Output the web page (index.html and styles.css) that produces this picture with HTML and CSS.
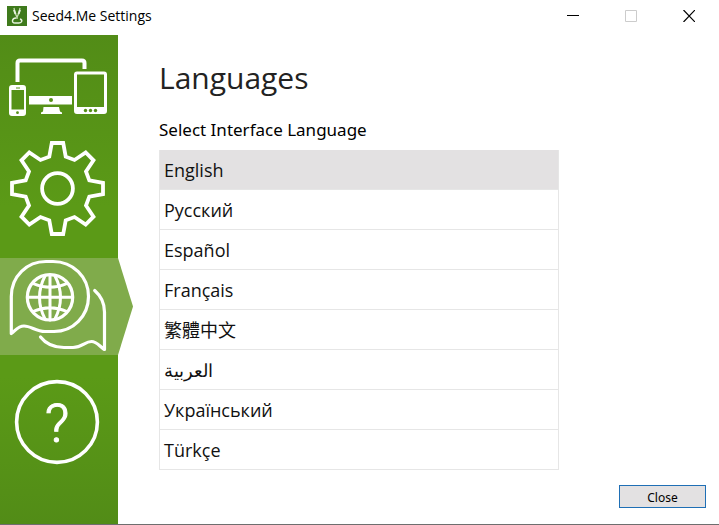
FILE: index.html
```html
<!DOCTYPE html>
<html lang="en">
<head>
    <meta charset="UTF-8">
    <meta name="viewport" content="width=device-width, initial-scale=1.0">
    <title>Seed4.Me Settings</title>
    <link rel="stylesheet" href="styles.css">
</head>
<body>
    <header class="titlebar">
        <svg class="app-icon" viewBox="0 0 20 20" aria-hidden="true">
            <rect width="20" height="20" fill="#3f7a1c"/>
            <path d="M7 2l1 5c1 2 2 3 2 6M13 2l-1 5c-1 2-2 3-2 6" fill="none" stroke="#c5dcb0" stroke-width="1.3"/>
            <path d="M7 4l1.500 4M13 4l-1.500 4" stroke="#e8f2df" stroke-width="2"/>
            <path d="M9 12c-4 0-5 5-1 5h4c3 0 4-3 1-4" fill="none" stroke="#e8f2df" stroke-width="1.4"/>
        </svg>
        <span class="title">Seed4.Me Settings</span>
        <div class="window-buttons">
            <button type="button" class="window-button" aria-label="Minimize">
                <svg viewBox="0 0 12 12"><path d="M0 5.5h12" stroke="#000"/></svg>
            </button>
            <button type="button" class="window-button" aria-label="Maximize" disabled>
                <svg viewBox="0 0 12 12"><path d="M.5 .5h11v11H.5z" stroke="#ccc"/></svg>
            </button>
            <button type="button" class="window-button" aria-label="Close window">
                <svg viewBox="0 0 12 12"><path d="M.5 0l11.500 12M12 0L.5 12" stroke="#000" stroke-width="1.2"/></svg>
            </button>
        </div>
    </header>

    <div class="window">
        <nav class="sidebar">
            <button type="button" class="nav-item" aria-label="Devices">
                <svg width="118" height="61" viewBox="0 0 118 61">
                    <path d="M17.500 24V5q0-2.500 2.500-2.500h62q2.500 0 2.500 2.500v6" fill="none" stroke="#fff" stroke-width="4"/>
                    <path d="M12 27h11q3 0 3 3v25q0 3-3 3H12q-3 0-3-3V30q0-3 3-3zM11.500 32v19.500h12.500V32z" fill="#fff" fill-rule="evenodd"/>
                    <path d="M16 30h4" stroke="#559016"/>
                    <circle cx="17.500" cy="54.700" r="1.400" fill="#559016"/>
                    <path d="M29 38h43v8.500H29zM43.500 49h15.500l1 4.500 2 1V56H41v-1.500l2-1z" fill="#fff"/>
                    <circle cx="51" cy="42" r="2" fill="#559016"/>
                    <path d="M77 13.500h27q3 0 3 3V53q0 3-3 3H77q-3 0-3-3V16.500q0-3 3-3zM77 16.500v32.500h27V16.500z" fill="#fff" fill-rule="evenodd"/>
                    <g fill="#559016">
                        <circle cx="85.500" cy="52.500" r="1.700"/>
                        <circle cx="90.500" cy="52.500" r="1.700"/>
                        <circle cx="95.500" cy="52.500" r="1.700"/>
                    </g>
                </svg>
            </button>
            <button type="button" class="nav-item" aria-label="Settings">
                <svg width="118" height="95" viewBox="0 0 118 95">
                    <g transform="translate(57.500 47.500)" fill="none" stroke="#fff" stroke-width="3.800">
                        <path d="M-5.700-45.500H5.700L8.200-31.800 17-28.500 28.200-36 36-28.200 28.500-17 31.800-8.200 45.500-5.700V5.700L31.800 8.200 28.500 17 36 28.200 28.200 36 17 28.500 8.200 31.800 5.700 45.500H-5.700L-8.200 31.800-17 28.500-28.200 36-36 28.200-28.500 17-31.800 8.200-45.500 5.700V-5.700L-31.800-8.200-28.500-17-36-28.200-28.200-36-17-28.500-8.200-31.800z"/>
                        <circle r="15.400"/>
                    </g>
                </svg>
            </button>
            <button type="button" class="nav-item active" aria-label="Languages" aria-current="page">
                <svg width="118" height="97" viewBox="0 0 118 97">
                    <g fill="none" stroke="#fff" stroke-width="3.200" stroke-linecap="round" stroke-linejoin="round">
                        <path d="M11.300 75.500V38.500C11.300 18 27 3.500 46 3.500H53C73 3.500 88.500 19 88.500 38.500S73 73.500 54 73.500H45C36 73.500 31 68 24 68C18 68 15 73 11.300 75.500z"/>
                        <path d="M94.700 32.500C101 38 104.500 46 104.500 54V91.500C100 89 97 83.500 91.500 83.500C85 83.500 82 89.500 73 89.500H64C54 89.500 46 86 40.500 79"/>
                        <circle cx="50" cy="39.300" r="22.700"/>
                        <path d="M50 17v45M27.500 39.300h45M33 25.500Q50 33 67 25.500M33 53.500Q50 46 67 53.500" stroke-width="3"/>
                        <path d="M45 18Q34 39.300 45 61M55 18Q66 39.300 55 61" stroke-width="3"/>
                    </g>
                </svg>
            </button>
            <button type="button" class="nav-item" aria-label="Help">
                <svg width="118" height="90" viewBox="0 0 118 90">
                    <circle cx="57" cy="45" r="40.400" fill="none" stroke="#fff" stroke-width="3.600"/>
                    <text class="help-mark" x="57" y="65" text-anchor="middle">?</text>
                </svg>
            </button>
        </nav>

        <main class="content">
            <h1>Languages</h1>
            <h2 id="language-label">Select Interface Language</h2>
            <ul class="language-list" role="listbox" aria-labelledby="language-label">
                <li role="option" class="selected" aria-selected="true">English</li>
                <li role="option">Русский</li>
                <li role="option">Español</li>
                <li role="option">Français</li>
                <li role="option" lang="zh-Hant">繁體中文</li>
                <li role="option" lang="ar">العربية</li>
                <li role="option">Український</li>
                <li role="option">Türkçe</li>
            </ul>
            <button type="button" class="close-button">Close</button>
        </main>
    </div>
</body>
</html>
```
FILE: styles.css
```css
* {
    box-sizing: border-box;
}
body {
    display: flex;
    flex-direction: column;
    min-height: 100vh;
    margin: 0;
    background: #fff;
    border-bottom: 1px solid #6e6e6e;
    color: #111;
    font-family: "Open Sans", "Noto Sans", "Noto Sans CJK TC", sans-serif;
}
button {
    padding: 0;
    border: none;
    background: none;
    cursor: pointer;
}
svg {
    display: block;
}
.titlebar {
    display: flex;
    align-items: center;
    height: 35px;
    padding: 0 1px 3px 7px;
}
.app-icon {
    width: 20px;
    height: 20px;
}
.title {
    margin-left: 5px;
    color: #000;
    font-size: 14px;
    line-height: 20px;
}
.window-buttons {
    display: flex;
    margin-left: auto;
}
.window-button {
    display: flex;
    align-items: center;
    justify-content: center;
    width: 58px;
    height: 32px;
}
.window-button svg {
    width: 12px;
    height: 12px;
    fill: none;
}
.window {
    display: flex;
    flex: 1;
}
.sidebar {
    display: flex;
    flex-direction: column;
    gap: 22px;
    width: 118px;
    padding-top: 23px;
    background: linear-gradient(#528c17, #5b9a17 35%, #5b9a17 70%, #528c17);
}
.nav-item {
    position: relative;
}
.nav-item.active {
    background: #80ab4b;
}
.nav-item.active::after {
    content: "";
    position: absolute;
    top: 0;
    left: 100%;
    width: 15px;
    height: 100%;
    background: #80ab4b;
    clip-path: polygon(0 0, 100% 50%, 0 100%);
}
.help-mark {
    fill: #fff;
    stroke: #fff;
    stroke-width: 1px;
    font-family: Roboto, sans-serif;
    font-size: 54px;
    font-weight: 300;
}
.content {
    display: flex;
    flex: 1;
    flex-direction: column;
    padding: 22px 13px 16px 41px;
}
h1 {
    margin: 0;
    color: #222;
    font-size: 30px;
    font-weight: 400;
    line-height: 42px;
}
h2 {
    margin: 18px 0 8px;
    color: #000;
    font-family: "Noto Sans", sans-serif;
    font-size: 17px;
    font-weight: 400;
    line-height: 25px;
}
.language-list {
    width: 100%;
    max-width: 400px;
    margin: 0;
    padding: 0;
    border: solid #e6e6e6;
    border-width: 0 1px;
    list-style: none;
    font-size: 18px;
    line-height: 41px;
}
.language-list li {
    height: 40px;
    padding: 0 4px;
    border-bottom: 1px solid #e6e6e6;
    cursor: pointer;
}
.language-list .selected {
    background: #e3e1e2;
}
.close-button {
    align-self: flex-end;
    width: 87px;
    height: 23px;
    margin-top: auto;
    padding-top: 2px;
    border: 1px solid #1f6fb5;
    background: #e3e1e2;
    color: #000;
    font-family: "Noto Sans", sans-serif;
    font-size: 12px;
}
```
